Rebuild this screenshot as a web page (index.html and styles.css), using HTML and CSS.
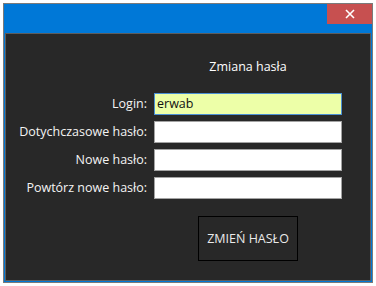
FILE: index.html
```html
<!DOCTYPE html>
<html>
<head>
<meta charset="utf-8">
<link rel="stylesheet" href="styles.css">
</head>
<body>
<div class="window">
  <div class="titlebar">
    <div class="close">
      <svg width="10" height="10" viewBox="0 0 10 10"><path d="M1 1 L9 9 M9 1 L1 9" stroke="#fff" stroke-width="1.6"/></svg>
    </div>
  </div>
  <div class="content">
    <div class="title">Zmiana hasła</div>
    <div class="rows">
      <div class="row"><label class="lbl">Login:</label><div class="field login">erwab</div></div>
      <div class="row"><label class="lbl">Dotychczasowe hasło:</label><div class="field"></div></div>
      <div class="row"><label class="lbl">Nowe hasło:</label><div class="field"></div></div>
      <div class="row"><label class="lbl">Powtórz nowe hasło:</label><div class="field"></div></div>
    </div>
    <div class="btn">ZMIEŃ HASŁO</div>
  </div>
</div>
</body>
</html>
```
FILE: styles.css
```css
* { box-sizing: border-box; }
body {
  margin: 0;
  background: #ffffff;
  font-family: "Open Sans", "Noto Sans", sans-serif;
  font-size: 12.5px;
}
.window {
  margin: 3px 0 0 3px;
  width: 370px;
  height: 280px;
  border: 1px solid #7a7a7a;
  background: #0078d7;
  display: flex;
  flex-direction: column;
}
.titlebar {
  height: 29px;
  display: flex;
  justify-content: flex-end;
  align-items: flex-start;
}
.close {
  width: 45px;
  height: 20px;
  background: #c75050;
  display: flex;
  align-items: center;
  justify-content: center;
}
.close svg { display: block; }
.content {
  margin: 0 1px 0 1px;
  height: 248px;
  border: 1px solid #5d5d5d;
  background: #282828;
  display: flex;
  flex-direction: column;
  padding-top: 25px;
}
.title {
  color: #ffffff;
  line-height: 16px;
  height: 16px;
  margin-left: 148px;
  width: 188px;
  text-align: center;
}
.rows {
  margin-top: 18px;
  display: flex;
  flex-direction: column;
  gap: 6px;
}
.row {
  display: flex;
  align-items: center;
  gap: 6px;
}
.lbl {
  width: 142px;
  text-align: right;
  padding-right: 1px;
  color: #f4f4f4;
  line-height: 16px;
}
.field {
  width: 188px;
  height: 22px;
  background: #ffffff;
  border: 1px solid #a3a3a3;
  color: #111;
  padding-left: 2px;
  line-height: 20px;
}
.field.login {
  background: #edffa8;
  border-color: #4a8fd4;
}
.btn {
  margin-top: 17px;
  margin-left: 192px;
  width: 100px;
  height: 45px;
  border: 1px solid #000000;
  color: #eaeaea;
  display: flex;
  align-items: center;
  justify-content: center;
}
```
